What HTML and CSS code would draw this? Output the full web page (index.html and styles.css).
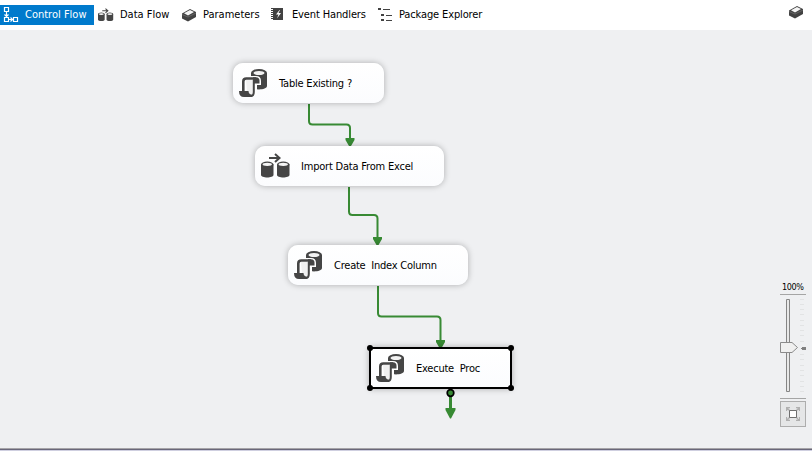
FILE: index.html
```
<!DOCTYPE html>
<html lang="en">
<head>
<meta charset="utf-8">
<title>Package Designer</title>
<link rel="stylesheet" href="styles.css">
</head>
<body>
<svg class="defs" aria-hidden="true">
  <symbol id="script" viewBox="0 0 29 30">
    <path d="M12 5v13c0 4.500 16 4.500 16 0V5z" fill="#454545"/>
    <ellipse cx="20" cy="5" rx="8" ry="4" fill="#454545"/>
    <ellipse cx="20" cy="5" rx="5.500" ry="2" fill="#f2f2f2"/>
    <path d="M2 23V13q0-5 5-5h10q5 0 5 5v4h-4v10H5z" fill="#fff"/>
    <path d="M7 12h7.500V23q0 4-2 4L8 24z" fill="#f0f0f0"/>
    <path d="M4.300 23V13.500q0-3 3-3H17" fill="none" stroke="#454545" stroke-width="2.600"/>
    <path d="M14 9.200h3q3.500 0 3.500 3.500v2.800H14z" fill="#454545"/>
    <path d="M14.800 12v12q0 4-3 4" fill="none" stroke="#454545" stroke-width="2"/>
    <path d="M0 23h9.500q.2 3.200 3 3.500L13 29H5Q0 29 0 23z" fill="#454545"/>
  </symbol>
  <symbol id="dataflow" viewBox="0 0 30 26">
    <path d="M0 11.500v10.500c0 3.300 12.500 3.300 12.500 0V11.500zM16 11.500v10.500c0 3.300 12.500 3.300 12.500 0V11.500z" fill="#454545"/>
    <ellipse cx="6.250" cy="11.500" rx="6.250" ry="3" fill="#454545"/>
    <ellipse cx="22.250" cy="11.500" rx="6.250" ry="3" fill="#454545"/>
    <ellipse cx="6.250" cy="11.300" rx="4.700" ry="1.600" fill="#f5f5f5"/>
    <ellipse cx="22.250" cy="11.300" rx="4.700" ry="1.600" fill="#f5f5f5"/>
    <path d="M8 5h10M14 1l4.500 4-4.500 4" fill="none" stroke="#454545" stroke-width="2"/>
  </symbol>
  <symbol id="box" viewBox="0 0 16 14">
    <path d="M1 5.500 9 1l6 3v5l-8 4.500-6-3z" fill="#424242"/>
    <path d="M3 5.200 9 2l4 2-6 3.500z" fill="#f4f4f4"/>
    <path d="M1 6.500 7 9l8-4" fill="none" stroke="#999" stroke-width=".4"/>
  </symbol>
</svg>

<header class="tabs">
  <div class="tab active">
    <svg class="ic ic-flow" viewBox="0 0 18 18"><path d="M3.500 1.500h4v4h-4zM3.500 11.500h4v4h-4zM12.500 11.500h4v4h-4zM5.500 6v5M8 13.500h4M3.500 8.500l2 2 2-2M9.500 11.500l2 2-2 2" fill="none" stroke="#fff" stroke-width="1.200"/></svg>
    <span>Control Flow</span>
  </div>
  <div class="tab t2"><svg class="ic"><use href="#dataflow"/></svg><span>Data Flow</span></div>
  <div class="tab t3"><svg class="ic"><use href="#box"/></svg><span>Parameters</span></div>
  <div class="tab t4">
    <svg class="ic" viewBox="0 0 16 16"><path d="M3 1h10v12H3z" fill="#424242"/><path d="M2 1v12" stroke="#424242" stroke-width="2" stroke-dasharray="1 1"/><path d="M9.500 3 6 7.500h2.500L7 11.500l4-5.500H8.500l1.500-3z" fill="#fff"/></svg>
    <span class="l4">Event Handlers</span>
  </div>
  <div class="tab t5">
    <svg class="ic" viewBox="0 0 16 16"><path d="M1 1h3v2H1zM4 7h3v2H4zM4 12h3v2H4zM6 2h7v1H6zM9 8h6v1H9zM9 13h6v1H9z" fill="#424242"/></svg>
    <span class="l4">Package Explorer</span>
  </div>
  <svg class="ic corner"><use href="#box"/></svg>
</header>

<main class="canvas">
  <svg class="wires" viewBox="0 30 812 418">
    <g fill="none" stroke="#388a34" stroke-width="2">
      <path d="M309 104V121q0 3.500 3.500 3.500H346.500q3.500 0 3.500 3.500V140"/>
      <path d="M349 187V211.500q0 3.500 3.500 3.500H374q3.500 0 3.500 3.500V239"/>
      <path d="M378 286V313q0 3.500 3.500 3.500H437q3.500 0 3.500 3.500V341"/>
    </g>
    <path d="M345.500 138h9v2l-3.500 6h-2l-3.500-6zM373 237h9v2l-3.500 6h-2l-3.500-6zM436 340h9v2l-3.500 6h-2l-3.500-6z" fill="#388a34"/>
  </svg>
  <div class="node n1"><svg class="nic"><use href="#script"/></svg><span>Table Existing ?</span></div>
  <div class="node n2"><svg class="nic df"><use href="#dataflow"/></svg><span>Import Data From Excel</span></div>
  <div class="node n3"><svg class="nic"><use href="#script"/></svg><span class="s3">Create&nbsp; Index Column</span></div>
  <div class="node n4"><svg class="nic"><use href="#script"/></svg><span class="s3">Execute&nbsp; Proc</span></div>
  <svg class="wires" viewBox="0 30 812 418">
    <path d="M449 393h3v15h3.500v2l-4.500 8.500h-1l-4.500-8.500v-2h3.500z" fill="#388a34"/>
    <circle cx="450.500" cy="393" r="3.300" fill="#388a34" stroke="#000" stroke-width="1.700"/>
    <g><circle cx="370" cy="348" r="3"/><circle cx="511" cy="348" r="3"/><circle cx="370" cy="388" r="3"/><circle cx="511" cy="388" r="3"/></g>
  </svg>
  <aside class="zoom">
    <span class="pct">100%</span>
    <svg class="slider" viewBox="0 0 26 106">
      <path d="M0 .5h26M0 104.500h26" stroke="#a5a5a5"/>
      <path d="M6.500 5.500h3v92h-3z" fill="#e8e8e8" stroke="#858585"/>
      <path d="M20 5.500h4M20 10.500h4M20 15.500h4M20 20.500h4M20 26.500h4M20 31.500h4M20 36.500h4M20 41.500h4M20 47.500h4M20 60.500h4M20 65.500h4M20 71.500h4M20 76.500h4M20 81.500h4M20 87.500h4M20 92.500h4M20 97.500h4" stroke="#e2e3e4"/>
      <path d="M22 53h4v3h-4zM21 54h1v1h-1z" fill="#808080"/>
      <path d="M.5 48.500h11.500l5.500 5-5.500 5H.5z" fill="#f0f0f0" stroke="#8b8b8b"/>
    </svg>
    <button class="fit" aria-label="Fit">
      <svg viewBox="0 0 14 14"><path d="M.5 4V.5H4M10 .5h3.500V4M13.500 10v3.500H10M4 13.500H.5V10M1 1l3 3M13 1l-3 3M13 13l-3-3M1 13l3-3" fill="none" stroke="#b0b0b0" stroke-width="1.300"/><path d="M3.500 3.500h7v7h-7z" fill="#fff" stroke="#707070"/></svg>
    </button>
  </aside>
</main>
<footer class="edge"></footer>
</body>
</html>
```

FILE: styles.css
```
* { box-sizing: border-box; }
body { margin: 0; width: 812px; height: 451px; overflow: hidden; display: flex; flex-direction: column; background: #eff0f2; color: #000; font: 11px/14px "DejaVu Sans Condensed", "DejaVu Sans", sans-serif; font-stretch: condensed; }
.defs { position: absolute; width: 0; height: 0; }
.tabs { display: flex; height: 30px; background: #fff; padding-top: 5px; }
.tab { display: flex; height: 20px; align-items: center; white-space: nowrap; }
.active { width: 94px; background: #007acc; color: #fff; padding-left: 1px; }
.ic { width: 16px; height: 16px; flex: none; margin-right: 6px; }
.ic-flow { width: 18px; height: 18px; }
.t2 { width: 83px; padding-left: 4px; }
.t3 { width: 93px; padding-left: 4px; }
.t4 { width: 107px; }
.l4 { letter-spacing: -.13px; }
.corner { width: 16px; height: 14px; margin: 0 8px 0 auto; }
.canvas { position: relative; height: 418px; flex: none; }
.wires { position: absolute; left: 0; top: 0; width: 812px; height: 418px; }
.node { position: absolute; height: 40px; border-radius: 10px; background: linear-gradient(#fff, #fbfcfe); box-shadow: 0 0 6px rgba(0,0,0,.28); display: flex; align-items: center; padding-left: 6px; white-space: pre; }
.node span { padding-top: 2px; letter-spacing: -.2px; }
.node .s3 { letter-spacing: -.23px; }
.nic { width: 29px; height: 30px; flex: none; margin-right: 11px; }
.df { width: 30px; height: 26px; margin-right: 10px; }
.n1 { left: 233px; top: 33px; width: 151px; }
.n2 { left: 255px; top: 116px; width: 189px; }
.n3 { left: 288px; top: 215px; width: 180px; }
.n4 { left: 369px; top: 317px; width: 143px; height: 42px; border: 2px solid #000; border-radius: 4px; padding-left: 5px; }
.zoom { position: absolute; left: 780px; top: 250px; width: 26px; display: flex; flex-direction: column; }
.pct { font-size: 9px; line-height: 15px; height: 14px; padding-left: 2px; white-space: nowrap; letter-spacing: -.4px; }
.slider { width: 26px; height: 106px; }
.fit { width: 26px; height: 26px; margin-top: 1px; padding: 0; border: 1px solid #adadad; background: #e5e6e7; display: grid; place-items: center; }
.fit svg { width: 14px; height: 14px; }
.edge { height: 3px; flex: none; background: linear-gradient(#a6a4a8 0 1px, #69677a 1px 2px, #cfcfe0 2px); }
```
